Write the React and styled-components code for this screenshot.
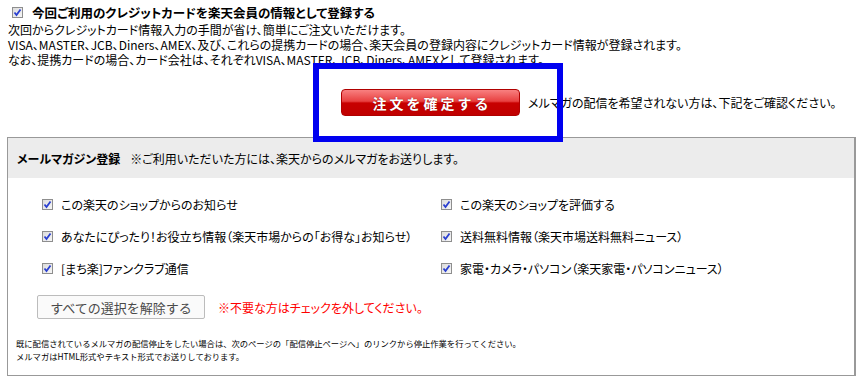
import React from "react";
import styled, { createGlobalStyle } from "styled-components";

const GlobalStyle = createGlobalStyle`
	body {
		margin: 0;
		background: #ffffff;
		font-family: "Noto Sans CJK JP", "Liberation Sans", sans-serif;
		font-feature-settings: "palt";
		color: #000;
	}
`;

const Page = styled("div")`
	position: relative;
	width: 864px;
	height: 382px;
	overflow: hidden;
`;

const Heading = styled("label")`
	display: flex;
	align-items: center;
	gap: 9px;
	margin: 4px 0 0 12px;
	height: 16px;
	font-size: 12.5px;
	font-weight: bold;
`;

const Box = styled("span")`
	display: inline-flex;
	align-items: center;
	justify-content: center;
	flex: none;
	width: 11px;
	height: 11px;
	box-sizing: border-box;
	border: 1px solid #8e8e8e;
	background: linear-gradient(135deg, #dcdcdc, #f6f6f6);
`;

const Notice = styled("p")`
	margin: 2px 0 0 8px;
	font-size: 12px;
	line-height: 15px;
`;

const ActionRow = styled("div")`
	display: flex;
	align-items: center;
	gap: 8px;
	margin: 22px 0 0 341px;
	font-size: 12px;
`;

const ConfirmButton = styled("button")`
	width: 179px;
	height: 27px;
	border: 1px solid #b00000;
	border-radius: 4px;
	background: linear-gradient(
		#f88080 0%,
		#e84040 45%,
		#c80000 52%,
		#c00000 100%
	);
	color: #fff;
	font-family: inherit;
	font-size: 14px;
	font-weight: bold;
	letter-spacing: 3px;
	text-shadow: 0 0 1px #700;
	padding: 0 0 0 3px;
`;

const Highlight = styled("div")`
	position: absolute;
	left: 313px;
	top: 63px;
	width: 250px;
	height: 79px;
	box-sizing: border-box;
	border: 6px solid #0000f0;
`;

const Panel = styled("section")`
	margin: 21px 8px 0 7px;
	height: 239px;
	box-sizing: border-box;
	border: 1px solid #999;
	border-right-width: 2px;
`;

const PanelHeader = styled("div")`
	display: flex;
	align-items: center;
	gap: 10px;
	height: 40px;
	padding-left: 9px;
	background: #ececec;
	font-size: 12px;
`;

const PanelBody = styled("div")`
	padding: 17px 0 0 34px;
`;

const Options = styled("div")`
	display: grid;
	grid-template-columns: 399px 1fr;
	row-gap: 14px;
`;

const Option = styled("label")`
	display: flex;
	align-items: center;
	gap: 8px;
	height: 18px;
	font-size: 12px;
`;

const ClearRow = styled("div")`
	display: flex;
	align-items: center;
	gap: 13px;
	margin: 18px 0 0 -5px;
`;

const ClearButton = styled("button")`
	width: 168px;
	height: 24px;
	border: 1px solid #bcbcbc;
	border-radius: 2px;
	background: #fafafa;
	color: #4a4a4a;
	font-family: inherit;
	font-size: 13px;
	padding: 0;
`;

const Warning = styled("span")`
	color: #ff0000;
	font-size: 12px;
`;

const FinePrint = styled("p")`
	margin: 18px 0 0 -26px;
	font-size: 8.3px;
	line-height: 13px;
	color: #000;
	font-feature-settings: normal;
`;

function Check() {
	return (
		<Box>
			<svg width="9" height="9" viewBox="0 0 9 9">
				<path
					d="M1.5 4.5 L3.5 7 L7.5 1.5"
					fill="none"
					stroke="#2a3fd0"
					strokeWidth="1.8"
				/>
			</svg>
		</Box>
	);
}

const options = [
	"この楽天のショップからのお知らせ",
	"この楽天のショップを評価する",
	"あなたにぴったり！お役立ち情報（楽天市場からの「お得な」お知らせ）",
	"送料無料情報（楽天市場送料無料ニュース）",
	"[まち楽]ファンクラブ通信",
	"家電・カメラ・パソコン（楽天家電・パソコンニュース）",
];

function App() {
	return (
		<Page>
			<GlobalStyle />
			<Heading>
				<Check />
				今回ご利用のクレジットカードを楽天会員の情報として登録する
			</Heading>
			<Notice>
				次回からクレジットカード情報入力の手間が省け、簡単にご注文いただけます。
				<br />
				VISA、MASTER、JCB、Diners、AMEX、及び、これらの提携カードの場合、楽天会員の登録内容にクレジットカード情報が登録されます。
				<br />
				なお、提携カードの場合、カード会社は、それぞれVISA、MASTER、JCB、Diners、AMEXとして登録されます。
			</Notice>
			<ActionRow>
				<ConfirmButton>注文を確定する</ConfirmButton>
				<span>メルマガの配信を希望されない方は、下記をご確認ください。</span>
			</ActionRow>
			<Highlight />
			<Panel>
				<PanelHeader>
					<b>メールマガジン登録</b>
					<span>※ご利用いただいた方には、楽天からのメルマガをお送りします。</span>
				</PanelHeader>
				<PanelBody>
					<Options>
						{options.map((text) => (
							<Option key={text}>
								<Check />
								{text}
							</Option>
						))}
					</Options>
					<ClearRow>
						<ClearButton>すべての選択を解除する</ClearButton>
						<Warning>※不要な方はチェックを外してください。</Warning>
					</ClearRow>
					<FinePrint>
						既に配信されているメルマガの配信停止をしたい場合は、次のページの「配信停止ページへ」のリンクから停止作業を行ってください。
						<br />
						メルマガはHTML形式やテキスト形式でお送りしております。
					</FinePrint>
				</PanelBody>
			</Panel>
		</Page>
	);
}

export default App;
